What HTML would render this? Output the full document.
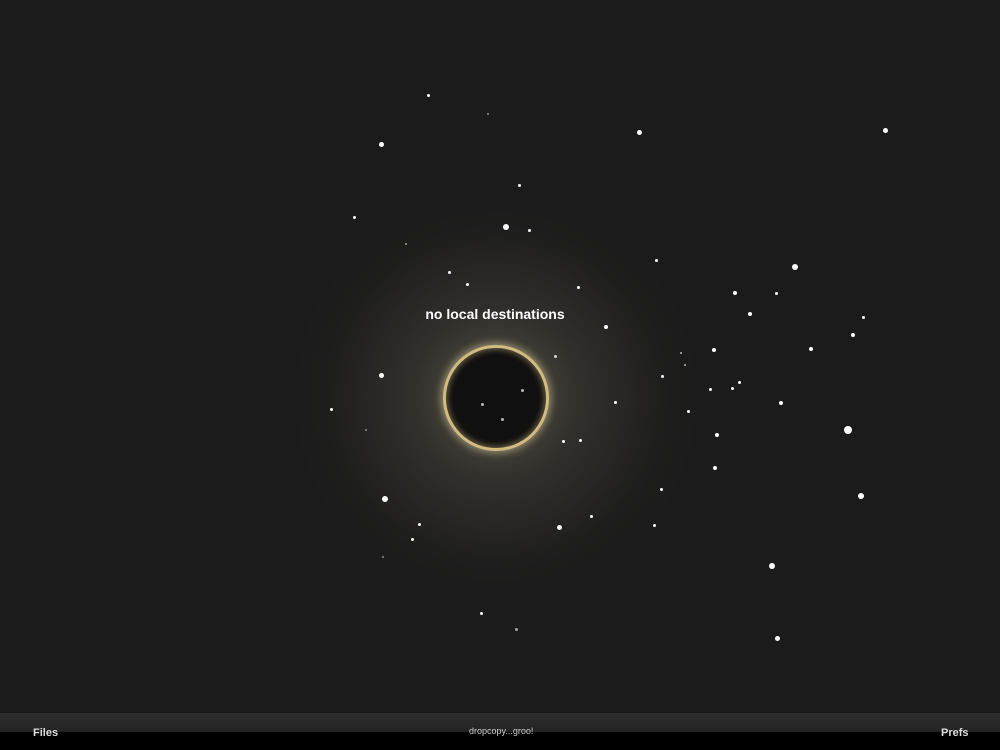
<!DOCTYPE html>
<html><head><meta charset="utf-8"><style>
html,body{margin:0;padding:0;width:1000px;height:750px;overflow:hidden;background:#1b1b1b;font-family:"Liberation Sans",sans-serif}
.s{position:absolute;border-radius:50%;background:#fff}
#glow{position:absolute;left:296px;top:197px;width:400px;height:400px;border-radius:50%;background:radial-gradient(circle,rgba(200,190,160,0.35) 0%,rgba(150,140,115,0.18) 30%,rgba(60,58,52,0.08) 60%,rgba(27,27,27,0) 75%)}
#ring{position:absolute;left:443px;top:345px;width:100px;height:100px;border-radius:50%;border:3px solid #d2bb80;box-shadow:0 0 8px 2px rgba(240,225,170,0.5),inset 0 0 6px 2px rgba(200,180,120,0.45);background:#101010}
#t{position:absolute;left:0;width:990px;top:306px;text-align:center;color:#fff;font-weight:bold;font-size:14px}
#bar{position:absolute;left:0;top:713px;width:1000px;height:19px;background:linear-gradient(#2e2e2e,#232323)}
#bot{position:absolute;left:0;top:732px;width:1000px;height:18px;background:#000}
.b{position:absolute;color:#ddd;font-weight:bold;font-size:11px;top:727px}
</style></head><body>
<div id="glow"></div>
<div id="ring"></div>
<div id="t">no local destinations</div>
<div id="bar"></div><div id="bot"></div>
<div class="b" style="left:33px">Files</div>
<div class="b" style="left:941px">Prefs</div>
<div style="position:absolute;left:469px;top:726px;color:#ccc;font-size:9px">dropcopy...groo!</div>
<div class="s" style="left:379px;top:142px;width:5px;height:5px"></div>
<div class="s" style="left:637px;top:130px;width:5px;height:5px"></div>
<div class="s" style="left:883px;top:128px;width:5px;height:5px"></div>
<div class="s" style="left:503px;top:224px;width:6px;height:6px"></div>
<div class="s" style="left:792px;top:264px;width:6px;height:6px"></div>
<div class="s" style="left:379px;top:373px;width:5px;height:5px"></div>
<div class="s" style="left:844px;top:426px;width:8px;height:8px"></div>
<div class="s" style="left:382px;top:496px;width:6px;height:6px"></div>
<div class="s" style="left:858px;top:493px;width:6px;height:6px"></div>
<div class="s" style="left:769px;top:563px;width:6px;height:6px"></div>
<div class="s" style="left:775px;top:636px;width:5px;height:5px"></div>
<div class="s" style="left:557px;top:525px;width:5px;height:5px"></div>
<div class="s" style="left:748px;top:312px;width:4px;height:4px"></div>
<div class="s" style="left:851px;top:333px;width:4px;height:4px"></div>
<div class="s" style="left:809px;top:347px;width:4px;height:4px"></div>
<div class="s" style="left:712px;top:348px;width:4px;height:4px"></div>
<div class="s" style="left:779px;top:401px;width:4px;height:4px"></div>
<div class="s" style="left:715px;top:433px;width:4px;height:4px"></div>
<div class="s" style="left:713px;top:466px;width:4px;height:4px"></div>
<div class="s" style="left:660px;top:488px;width:3px;height:3px"></div>
<div class="s" style="left:653px;top:524px;width:3px;height:3px"></div>
<div class="s" style="left:590px;top:515px;width:3px;height:3px"></div>
<div class="s" style="left:418px;top:523px;width:3px;height:3px"></div>
<div class="s" style="left:411px;top:538px;width:3px;height:3px"></div>
<div class="s" style="left:562px;top:440px;width:3px;height:3px"></div>
<div class="s" style="left:604px;top:325px;width:4px;height:4px"></div>
<div class="s" style="left:577px;top:286px;width:3px;height:3px"></div>
<div class="s" style="left:466px;top:283px;width:3px;height:3px"></div>
<div class="s" style="left:448px;top:271px;width:3px;height:3px"></div>
<div class="s" style="left:353px;top:216px;width:3px;height:3px"></div>
<div class="s" style="left:427px;top:94px;width:3px;height:3px"></div>
<div class="s" style="left:518px;top:184px;width:3px;height:3px"></div>
<div class="s" style="left:528px;top:229px;width:3px;height:3px"></div>
<div class="s" style="left:733px;top:291px;width:4px;height:4px"></div>
<div class="s" style="left:775px;top:292px;width:3px;height:3px"></div>
<div class="s" style="left:862px;top:316px;width:3px;height:3px"></div>
<div class="s" style="left:661px;top:375px;width:3px;height:3px"></div>
<div class="s" style="left:687px;top:410px;width:3px;height:3px"></div>
<div class="s" style="left:738px;top:381px;width:3px;height:3px"></div>
<div class="s" style="left:731px;top:387px;width:3px;height:3px"></div>
<div class="s" style="left:709px;top:388px;width:3px;height:3px"></div>
<div class="s" style="left:614px;top:401px;width:3px;height:3px"></div>
<div class="s" style="left:579px;top:439px;width:3px;height:3px"></div>
<div class="s" style="left:330px;top:408px;width:3px;height:3px"></div>
<div class="s" style="left:480px;top:612px;width:3px;height:3px"></div>
<div class="s" style="left:515px;top:628px;width:3px;height:3px;opacity:.6"></div>
<div class="s" style="left:481px;top:403px;width:3px;height:3px;opacity:.7"></div>
<div class="s" style="left:521px;top:389px;width:3px;height:3px;opacity:.7"></div>
<div class="s" style="left:501px;top:418px;width:3px;height:3px;opacity:.7"></div>
<div class="s" style="left:655px;top:259px;width:3px;height:3px"></div>
<div class="s" style="left:405px;top:243px;width:2px;height:2px;opacity:.6"></div>
<div class="s" style="left:365px;top:429px;width:2px;height:2px;opacity:.5"></div>
<div class="s" style="left:382px;top:556px;width:2px;height:2px;opacity:.5"></div>
<div class="s" style="left:487px;top:113px;width:2px;height:2px;opacity:.5"></div>
<div class="s" style="left:554px;top:355px;width:3px;height:3px;opacity:.8"></div>
<div class="s" style="left:680px;top:352px;width:2px;height:2px;opacity:.7"></div>
<div class="s" style="left:684px;top:364px;width:2px;height:2px;opacity:.7"></div>
</body></html>
